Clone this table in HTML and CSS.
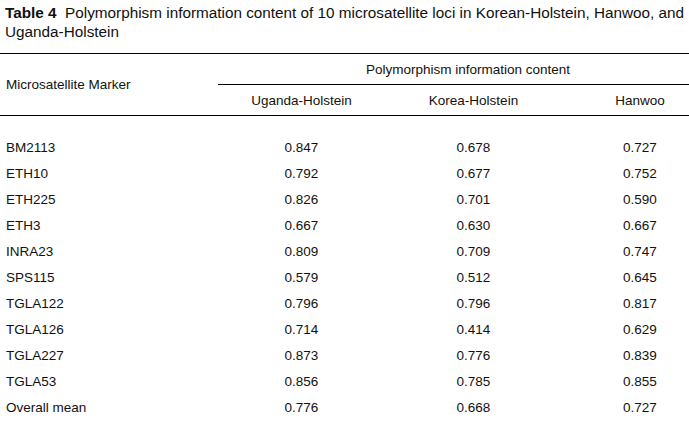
FILE: index.html
```html
<!DOCTYPE html>
<html>
<head>
<meta charset="utf-8">
<link rel="stylesheet" href="styles.css">
</head>
<body>
<div class="page">
  <p class="caption"><b>Table 4</b>&nbsp; Polymorphism information content of 10 microsatellite loci in Korean-Holstein, Hanwoo, and Uganda-Holstein</p>
  <table class="data">
    <colgroup>
      <col class="c-marker"><col class="c-ug"><col class="c-ko"><col class="c-hw">
    </colgroup>
    <thead>
      <tr class="h1">
        <th rowspan="2" class="marker">Microsatellite Marker</th>
        <th colspan="3" class="group">Polymorphism information content</th>
      </tr>
      <tr class="h2">
        <th>Uganda-Holstein</th>
        <th>Korea-Holstein</th>
        <th>Hanwoo</th>
      </tr>
    </thead>
    <tbody>
      <tr class="first"><td class="marker">BM2113</td><td>0.847</td><td>0.678</td><td>0.727</td></tr>
      <tr><td class="marker">ETH10</td><td>0.792</td><td>0.677</td><td>0.752</td></tr>
      <tr><td class="marker">ETH225</td><td>0.826</td><td>0.701</td><td>0.590</td></tr>
      <tr><td class="marker">ETH3</td><td>0.667</td><td>0.630</td><td>0.667</td></tr>
      <tr><td class="marker">INRA23</td><td>0.809</td><td>0.709</td><td>0.747</td></tr>
      <tr><td class="marker">SPS115</td><td>0.579</td><td>0.512</td><td>0.645</td></tr>
      <tr><td class="marker">TGLA122</td><td>0.796</td><td>0.796</td><td>0.817</td></tr>
      <tr><td class="marker">TGLA126</td><td>0.714</td><td>0.414</td><td>0.629</td></tr>
      <tr><td class="marker">TGLA227</td><td>0.873</td><td>0.776</td><td>0.839</td></tr>
      <tr><td class="marker">TGLA53</td><td>0.856</td><td>0.785</td><td>0.855</td></tr>
      <tr><td class="marker">Overall mean</td><td>0.776</td><td>0.668</td><td>0.727</td></tr>
    </tbody>
  </table>
</div>
</body>
</html>
```

FILE: styles.css
```css
html, body {
  margin: 0;
  padding: 0;
  background: #fff;
}
body {
  width: 689px;
  height: 427px;
  overflow: hidden;
  font-family: "Liberation Sans", Arial, sans-serif;
  color: #111;
}
.page {
  width: 720px;
}
.caption {
  margin: 0;
  padding: 3px 0 0 5px;
  width: 684px;
  font-size: 15.3px;
  line-height: 19px;
}
.caption b {
  font-weight: bold;
}
.data {
  margin-top: 12px;
  width: 718px;
  table-layout: fixed;
  border-collapse: collapse;
  font-size: 13.5px;
}
.c-marker { width: 218px; }
.c-ug { width: 167px; }
.c-ko { width: 177px; }
.c-hw { width: 156px; }
.data th {
  font-weight: normal;
  text-align: center;
  padding: 0;
  vertical-align: middle;
}
.data th.marker,
.data td.marker {
  text-align: left;
  padding-left: 6px;
}
.h1 {
  border-top: 1px solid #000;
}
.h1 th {
  height: 30px;
}
.h1 th.group {
  border-bottom: 1px solid #000;
}
.h2 th {
  height: 30px;
}
.h2 {
  border-bottom: 1px solid #000;
}
.data td {
  height: 26px;
  padding: 0;
  text-align: center;
  vertical-align: middle;
}
.data tr.first td {
  height: 45px;
  padding-top: 19px;
  box-sizing: border-box;
}
```
